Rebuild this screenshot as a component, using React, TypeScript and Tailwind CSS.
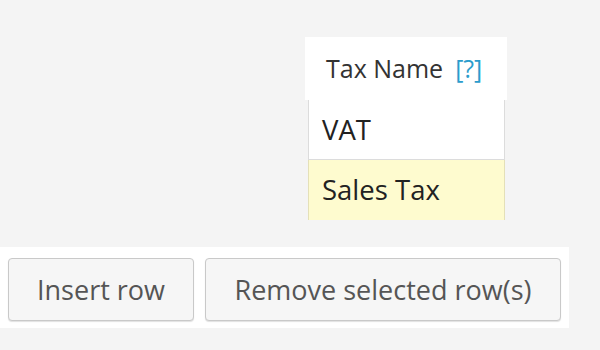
const rows = [
  { name: 'VAT', selected: false },
  { name: 'Sales Tax', selected: true },
];

export default function App() {
  return (
    <div
      className="w-[600px] h-[350px] bg-[#f4f4f4] overflow-hidden flex flex-col"
      style={{ fontFamily: '"Open Sans", "Noto Sans", sans-serif' }}
    >
      {/* tax table */}
      <div className="mt-[37px] ml-[305px] w-[202px] flex flex-col">
        <div className="h-[63px] bg-white flex items-center pl-[21px] text-[25px] text-[#333] leading-none">
          <span>Tax Name</span>
          <span className="ml-[12px] text-[#2b9ccc]">[?]</span>
        </div>
        {rows.map((row) => (
          <div
            key={row.name}
            className={
              row.selected
                ? 'ml-[3px] mr-[2px] h-[60px] bg-[#fefbcf] border-x border-[#e4e0b8] flex items-center pl-[13px] text-[27.5px] text-[#222] leading-none'
                : 'ml-[3px] mr-[2px] h-[60px] bg-white border-x border-b border-[#dcdcdc] flex items-center pl-[13px] text-[27.5px] text-[#222] leading-none'
            }
          >
            {row.name}
          </div>
        ))}
      </div>

      {/* actions */}
      <div className="mt-[27px] w-[569px] h-[81px] bg-white flex items-start gap-[11px] pl-[8px] pt-[11px]">
        <button className="w-[186px] h-[63px] bg-[#f6f6f6] border border-[#c9c9c9] rounded-[4px] shadow-[0_1px_1px_rgba(0,0,0,0.12)] text-[27px] text-[#555] leading-none">
          Insert row
        </button>
        <button className="w-[356px] h-[63px] bg-[#f6f6f6] border border-[#c9c9c9] rounded-[4px] shadow-[0_1px_1px_rgba(0,0,0,0.12)] text-[27px] text-[#555] leading-none">
          Remove selected row(s)
        </button>
      </div>
    </div>
  );
}
